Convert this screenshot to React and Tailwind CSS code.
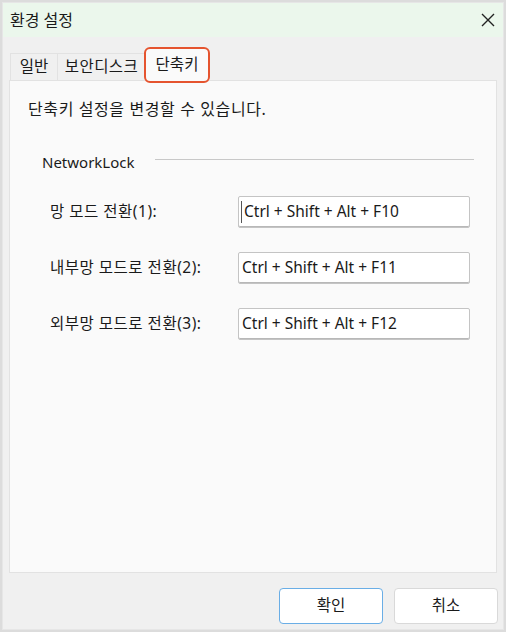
import React from "react";

const font = { fontFamily: '"Noto Sans", "Noto Sans CJK KR", sans-serif' };

function Row({ label, value, caret }) {
  return (
    <div className="flex items-center h-[32px]">
      <div className="w-[228px] pl-[40px] text-[15.5px] tracking-[0.5px] text-[#1a1a1a] whitespace-nowrap">{label}</div>
      <div className="w-[232px] h-[32px] border border-[#c4c4c4] rounded-[2px] bg-white flex items-center pl-[2px] text-[15.5px] text-[#1a1a1a] shadow-[inset_0_-1px_0_#b8b8b8]">
        {caret && <span className="w-[1px] h-[22px] bg-[#555] mr-[2px]" />}
        <span className={caret ? "" : "pl-[1px]"}>{value}</span>
      </div>
    </div>
  );
}

export default function App() {
  return (
    <div className="w-[506px] h-[632px] bg-[#dcdcdc] p-[2px]" style={font}>
      <div className="w-full h-full flex flex-col bg-[#f0f0f0] border border-[#e6e6e6]">
        <div className="h-[34px] bg-[#ebf7ec] flex items-center justify-between pl-[7px] pr-[8px]">
          <span className="text-[16px] text-[#1a1a1a]">환경 설정</span>
          <svg width="14" height="14" viewBox="0 0 14 14">
            <path d="M1 1L13 13M13 1L1 13" stroke="#222" strokeWidth="1.4" />
          </svg>
        </div>
        <div className="flex-1 flex flex-col px-[6px] pt-[10px]">
          <div className="flex items-end h-[33px] pl-[1px]">
            <div className="h-[27px] w-[48px] flex items-center justify-center border border-b-0 border-[#e2e2e2] bg-[#f0f0f0] text-[15.5px] text-[#1a1a1a]">일반</div>
            <div className="h-[27px] w-[88px] flex items-center justify-center border border-b-0 border-l-0 border-[#e2e2e2] bg-[#f0f0f0] text-[15.5px] tracking-[0.4px] text-[#1a1a1a]">보안디스크</div>
            <div className="relative h-[33px] w-[62px] flex items-center justify-center bg-[#fafafa] text-[15.5px] text-[#1a1a1a] -mb-[1px] z-10">
              단축키
              <div className="absolute left-[-2px] right-[-2px] top-[-1px] bottom-[-2px] border-2 border-[#e5542f] rounded-[6px]" />
            </div>
          </div>
          <div className="h-[493px] bg-[#fafafa] border border-[#e2e2e2] flex flex-col">
            <div className="pl-[18px] pt-[16px] text-[16px] tracking-[0.6px] text-[#1a1a1a]">단축키 설정을 변경할 수 있습니다.</div>
            <div className="flex items-center mt-[30px] pl-[32px] pr-[22px]">
              <span className="text-[15px] text-[#1a1a1a]">NetworkLock</span>
              <div className="flex-1 h-[1px] bg-[#c8c8c8] ml-[20px] -mt-[6px]" />
            </div>
            <div className="flex flex-col gap-[24px] mt-[22px]">
              <Row label="망 모드 전환(1):" value="Ctrl + Shift + Alt + F10" caret />
              <Row label="내부망 모드로 전환(2):" value="Ctrl + Shift + Alt + F11" />
              <Row label="외부망 모드로 전환(3):" value="Ctrl + Shift + Alt + F12" />
            </div>
          </div>
          <div className="flex justify-end gap-[11px] mt-[15px] -mr-[1px]">
            <button className="w-[104px] h-[36px] rounded-[4px] bg-white border border-[#6aaee6] text-[15.5px] text-[#1a1a1a]">확인</button>
            <button className="w-[104px] h-[36px] rounded-[4px] bg-white border border-[#d9d9d9] text-[15.5px] text-[#1a1a1a]">취소</button>
          </div>
        </div>
      </div>
    </div>
  );
}
